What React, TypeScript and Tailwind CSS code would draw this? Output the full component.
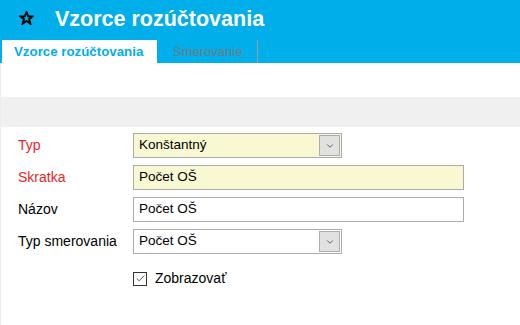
import { Check, ChevronDown } from "lucide-react"

function Field({ label, required, children }: { label: string; required?: boolean; children: React.ReactNode }) {
  return (
    <div className="flex items-center h-[25px]">
      <div className={`w-[115px] text-[14px] ${required ? "text-[#e8262a]" : "text-black"}`}>{label}</div>
      {children}
    </div>
  )
}

function Dropdown({ value, yellow }: { value: string; yellow?: boolean }) {
  return (
    <div
      className={`w-[209px] h-[25px] border border-[#ababab] flex items-center justify-between pl-[5px] pr-[1px] ${
        yellow ? "bg-[#f8f8d2]" : "bg-white"
      }`}
    >
      <span className="text-[13.5px] text-black">{value}</span>
      <div className="w-[21px] h-[21px] bg-[#e1e1e1] border border-[#adadad] flex items-center justify-center">
        <ChevronDown className="w-[10px] h-[10px] text-[#222]" strokeWidth={1.6} />
      </div>
    </div>
  )
}

function TextInput({ value, yellow }: { value: string; yellow?: boolean }) {
  return (
    <div
      className={`w-[331px] h-[25px] border border-[#ababab] flex items-center pl-[5px] ${
        yellow ? "bg-[#f8f8d2]" : "bg-white"
      }`}
    >
      <span className="text-[13.5px] text-black">{value}</span>
    </div>
  )
}

export default function App() {
  return (
    <div className="w-[520px] h-[325px] bg-white overflow-hidden" style={{ fontFamily: '"Liberation Sans", Arial, sans-serif' }}>
      {/* header */}
      <div className="bg-[#00aeea] h-[63px] flex flex-col">
        <div className="h-[40px] flex items-center">
          <svg className="ml-[19px] mb-[4px]" width="15" height="14" viewBox="0 0 15 14">
            <polygon
              points="7.5,1.2 9.2,5.3 13.6,5.4 10.1,8.2 11.3,12.6 7.5,10 3.7,12.6 4.9,8.2 1.4,5.4 5.8,5.3"
              fill="none"
              stroke="#000"
              strokeWidth="2"
              strokeLinejoin="miter"
            />
          </svg>
          <h1 className="ml-[21px] mt-[-2px] text-[21.5px] font-bold text-white">Vzorce rozúčtovania</h1>
        </div>
        <div className="h-[23px] flex items-stretch pl-[2px]">
          <div className="w-[155px] bg-white flex items-center pl-[12px] text-[13.3px] font-bold text-[#00aeea]">
            Vzorce rozúčtovania
          </div>
          <div className="w-[100px] flex items-center pl-[16px] text-[13px] text-[#707a80]">Smerovanie</div>
          <div className="w-px bg-[#a89a9a]" />
        </div>
      </div>

      {/* content */}
      <div className="border-l border-[#ececec] h-[262px]">
        <div className="h-[34px]" />
        <div className="h-[30px] bg-[#f0f0f0]" />
        <div className="pl-[17px] pt-[6px] flex flex-col gap-[7px]">
          <Field label="Typ" required>
            <Dropdown value="Konštantný" yellow />
          </Field>
          <Field label="Skratka" required>
            <TextInput value="Počet OŠ" yellow />
          </Field>
          <Field label="Názov">
            <TextInput value="Počet OŠ" />
          </Field>
          <Field label="Typ smerovania">
            <Dropdown value="Počet OŠ" />
          </Field>
          <div className="flex items-center pl-[115px] mt-[7px]">
            <div className="w-[14px] h-[14px] border border-[#333] bg-white flex items-center justify-center">
              <Check className="w-[11px] h-[11px] text-[#333]" strokeWidth={1.8} />
            </div>
            <span className="ml-[8px] text-[14px] text-black">Zobrazovať</span>
          </div>
        </div>
      </div>
    </div>
  )
}
